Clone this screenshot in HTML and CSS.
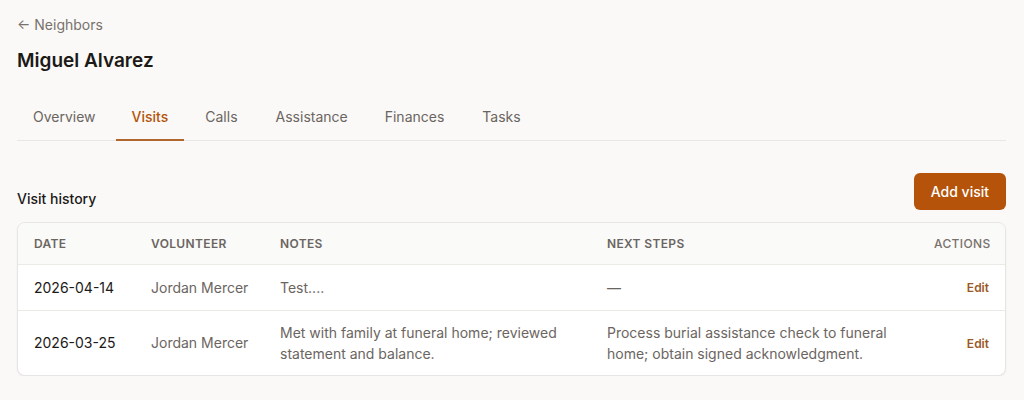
FILE: index.html
```html
<!DOCTYPE html>
<html>
<head>
<meta charset="utf-8">
<link rel="stylesheet" href="styles.css">
</head>
<body>
<div class="page">
  <a class="back" href="#">← Neighbors</a>
  <h1 class="title">Miguel Alvarez</h1>
  <nav class="tabs">
    <a class="tab" href="#">Overview</a>
    <a class="tab active" href="#">Visits</a>
    <a class="tab" href="#">Calls</a>
    <a class="tab" href="#">Assistance</a>
    <a class="tab" href="#">Finances</a>
    <a class="tab" href="#">Tasks</a>
  </nav>
  <div class="section-head">
    <h2 class="section-title">Visit history</h2>
    <button class="btn">Add visit</button>
  </div>
  <div class="card">
    <table class="table">
      <colgroup>
        <col class="c-date"><col class="c-vol"><col class="c-notes"><col class="c-next"><col class="c-act">
      </colgroup>
      <thead>
        <tr><th>Date</th><th>Volunteer</th><th>Notes</th><th>Next steps</th><th class="right th-act">Actions</th></tr>
      </thead>
      <tbody>
        <tr class="r1">
          <td class="date">2026-04-14</td>
          <td class="muted nowrap">Jordan Mercer</td>
          <td class="muted">Test....</td>
          <td class="muted">—</td>
          <td class="right"><a class="edit" href="#">Edit</a></td>
        </tr>
        <tr class="r2">
          <td class="date">2026-03-25</td>
          <td class="muted nowrap">Jordan Mercer</td>
          <td class="muted">Met with family at funeral home; reviewed statement and balance.</td>
          <td class="muted">Process burial assistance check to funeral home; obtain signed acknowledgment.</td>
          <td class="right"><a class="edit" href="#">Edit</a></td>
        </tr>
      </tbody>
    </table>
  </div>
</div>
</body>
</html>
```
FILE: styles.css
```css
* { box-sizing: border-box; }
html, body { margin: 0; padding: 0; }
body {
  background: #faf9f7;
  font-family: Inter, "Noto Sans", sans-serif;
  color: #1c1917;
}
.page { padding: 14px 18px 0 17px; }
.back {
  display: inline-block;
  font-size: 14px;
  color: #78716c;
  text-decoration: none;
  line-height: 20px;
}
.title {
  margin: 14px 0 0;
  font-size: 19px;
  font-weight: 600;
  line-height: 24px;
  color: #1c1917;
}
.tabs {
  display: flex;
  gap: 4px;
  margin-top: 24px;
  border-bottom: 1px solid #e9e7e4;
}
.tab {
  display: block;
  padding: 10px 16px 12px;
  font-size: 14px;
  line-height: 20px;
  color: #6b6561;
  text-decoration: none;
  border-bottom: 2px solid transparent;
  margin-bottom: -1px;
}
.tab:nth-child(3) { margin-left: 1px; }
.tab:nth-child(4) { margin-left: 2px; }
.tab:nth-child(5) { margin-left: 1px; }
.tab:nth-child(6) { margin-left: 2px; }
.tab.active {
  color: #b45309;
  font-weight: 500;
  border-bottom-color: #b0672e;
}
.section-head {
  display: flex;
  align-items: flex-end;
  justify-content: space-between;
  margin-top: 32px;
}
.section-title {
  margin: 0 0 1px;
  font-size: 14px;
  font-weight: 500;
  line-height: 20px;
  color: #1c1917;
}
.btn {
  height: 37px;
  padding: 0 17px;
  background: #b5530a;
  color: #fff;
  border: 0;
  border-radius: 6px;
  font-family: inherit;
  font-size: 14px;
  font-weight: 500;
}
.card {
  margin-top: 12px;
  background: #fff;
  border: 1px solid #e7e5e3;
  border-radius: 8px;
  box-shadow: 0 1px 2px rgba(0,0,0,0.06);
  overflow: hidden;
}
.table {
  width: 100%;
  border-collapse: collapse;
  table-layout: fixed;
}
.c-date { width: 117px; }
.c-vol { width: 129px; }
.c-notes { width: 327px; }
.c-next { width: 327px; }
th {
  background: #fafaf9;
  text-align: left;
  font-size: 12px;
  font-weight: 600;
  letter-spacing: 0.03em;
  text-transform: uppercase;
  color: #6b6561;
  height: 41px;
  padding: 0 16px;
  border-bottom: 1px solid #eceae7;
}
th.th-act { font-weight: 500; color: #78716c; }
td {
  font-size: 14px;
  line-height: 21px;
  padding: 11px 16px;
  vertical-align: middle;
}
tr.r1 td { border-bottom: 1px solid #eceae7; height: 46px; padding-top: 0; padding-bottom: 0; }
tr.r2 td { height: 64px; }
.nowrap { white-space: nowrap; }
.date { color: #1c1917; }
.muted { color: #6b6561; }
.right { text-align: right; }
.edit {
  font-size: 12px;
  font-weight: 600;
  color: #9a5a26;
  text-decoration: none;
}
```
